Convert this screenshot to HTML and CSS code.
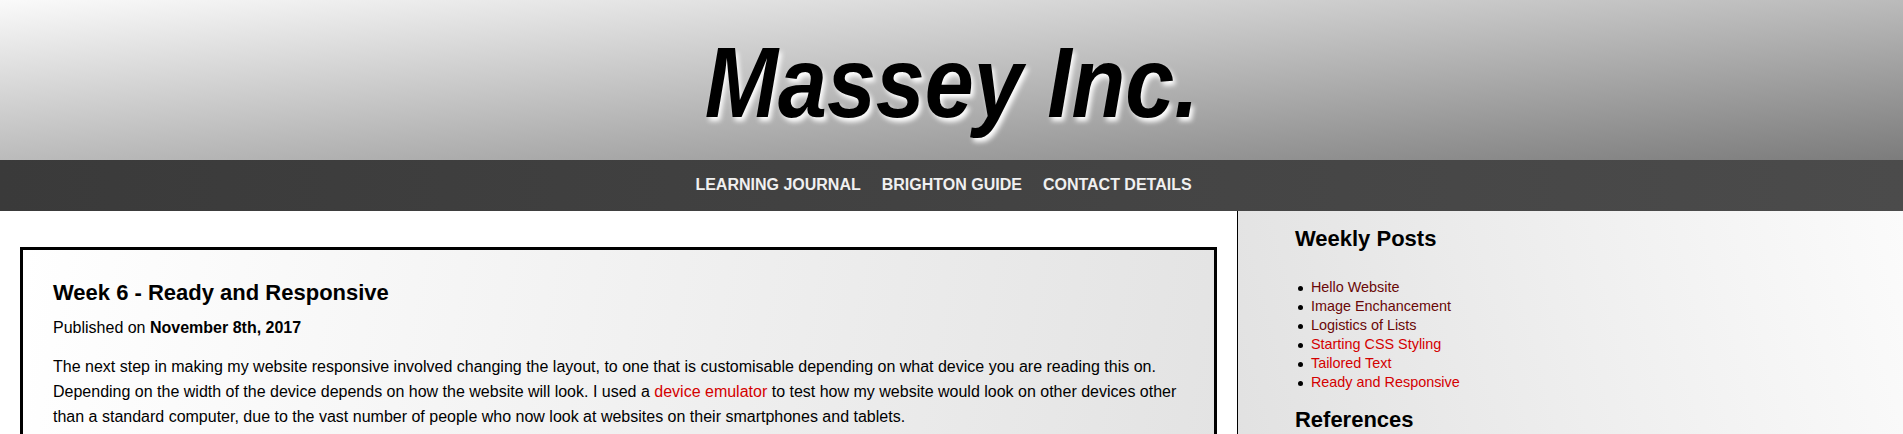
FILE: index.html
```html
<!DOCTYPE html>
<html lang="en">
<head>
<meta charset="utf-8">
<title>Massey Inc. - Week 6</title>
<link rel="stylesheet" href="styles.css">
</head>
<body>
<header class="site-header">
  <h1 class="site-title">Massey Inc.</h1>
</header>
<nav class="site-nav">
  <a href="#" class="nav-link">LEARNING JOURNAL</a>
  <a href="#" class="nav-link">BRIGHTON GUIDE</a>
  <a href="#" class="nav-link">CONTACT DETAILS</a>
</nav>
<div class="layout">
  <main class="main-col">
    <article class="post">
      <h2 class="post-title">Week 6 - Ready and Responsive</h2>
      <p class="post-date">Published on <strong>November 8th, 2017</strong></p>
      <p class="post-text">The next step in making my website responsive involved changing the layout, to one that is customisable depending on what device you are reading this on. Depending on the width of the device depends on how the website will look. I used a <a href="#" class="link">device emulator</a> to test how my website would look on other devices other than a standard computer, due to the vast number of people who now look at websites on their smartphones and tablets.</p>
      <p class="post-text">Using media queries I was able to set different rules for different screen sizes, so the navigation, columns and images rearrange themselves to suit the screen.</p>
    </article>
  </main>
  <aside class="sidebar">
    <h2 class="side-title">Weekly Posts</h2>
    <ul class="side-list">
      <li><a href="#" class="link visited">Hello Website</a></li>
      <li><a href="#" class="link visited">Image Enchancement</a></li>
      <li><a href="#" class="link visited">Logistics of Lists</a></li>
      <li><a href="#" class="link">Starting CSS Styling</a></li>
      <li><a href="#" class="link">Tailored Text</a></li>
      <li><a href="#" class="link">Ready and Responsive</a></li>
    </ul>
    <h2 class="side-title">References</h2>
    <ul class="side-list">
      <li><a href="#" class="link">W3Schools</a></li>
      <li><a href="#" class="link">MDN Web Docs</a></li>
    </ul>
  </aside>
</div>
</body>
</html>
```
FILE: styles.css
```css
* { box-sizing: border-box; }

body {
  margin: 0;
  font-family: "Liberation Sans", Arial, Helvetica, sans-serif;
  color: #000;
  background: #fff;
}

.site-header {
  height: 160px;
  padding-top: 32px;
  background: linear-gradient(to bottom right, #ffffff -4%, #7c7c7c 100%);
  text-align: center;
}

.site-title {
  display: inline-block;
  margin: 0;
  font-size: 100px;
  line-height: 100px;
  font-weight: bold;
  font-style: italic;
  color: #000;
  text-shadow: 3px 4px 6px #ffffff;
  transform: scaleX(0.88);
}

.site-nav {
  height: 51px;
  padding: 15px 0 17px 0;
  display: flex;
  justify-content: center;
  gap: 21px;
  background: linear-gradient(to right, #3a3a3a, #4b4b4b);
  line-height: 19px;
}

.nav-link {
  color: #f0f0f0;
  font-size: 16px;
  font-weight: bold;
  text-decoration: none;
}
.nav-link:last-child { margin-right: 16px; }

.layout {
  display: flex;
  align-items: stretch;
}

.main-col {
  flex: 0 0 65%;
  padding: 36px 20px 20px 20px;
  background: #fff;
}

.post {
  border: 3px solid #000;
  padding: 30px 30px 20px 30px;
  background: linear-gradient(100deg, #ffffff 0%, #e3e3e3 100%);
  font-size: 16px;
  line-height: 25px;
}

.post-title {
  margin: 0 0 10px 0;
  font-size: 22px;
  line-height: 25px;
  font-weight: bold;
}

.post-date,
.post-text {
  margin: 0 0 14px 0;
}

.link {
  color: #d40000;
  text-decoration: none;
}
.link.visited { color: #6a0808; }

.sidebar {
  flex: 1;
  border-left: 1px solid #000;
  padding: 15px 20px 20px 57px;
  background: linear-gradient(75deg, #e0e0e0 0%, #fbfbfb 100%);
  min-height: 400px;
}

.side-title {
  margin: 0;
  font-size: 22px;
  line-height: 25px;
  font-weight: bold;
}

.side-list {
  margin: 27px 0 15px 0;
  padding: 0;
  list-style: none;
  font-size: 14.4px;
  line-height: 19px;
}

.side-list li {
  display: flex;
  align-items: center;
}

.side-list li::before {
  content: "";
  flex: 0 0 5px;
  width: 5px;
  height: 5px;
  margin: 1px 8px 0 3px;
  border-radius: 50%;
  background: #000;
}
```
